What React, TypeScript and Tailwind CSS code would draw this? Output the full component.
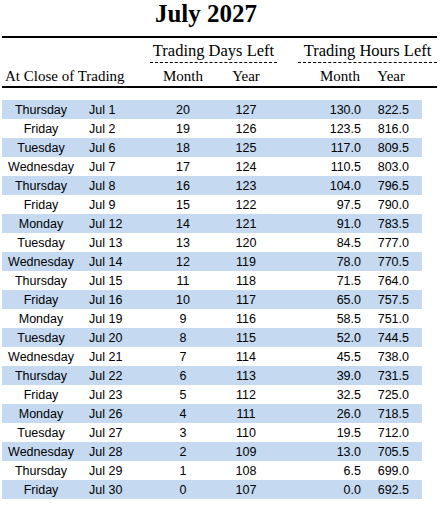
import React from "react";

type Row = {
  day: string;
  date: string;
  daysMonth: number;
  daysYear: number;
  hoursMonth: string;
  hoursYear: string;
};

const rows: Row[] = [
  { day: "Thursday", date: "Jul 1", daysMonth: 20, daysYear: 127, hoursMonth: "130.0", hoursYear: "822.5" },
  { day: "Friday", date: "Jul 2", daysMonth: 19, daysYear: 126, hoursMonth: "123.5", hoursYear: "816.0" },
  { day: "Tuesday", date: "Jul 6", daysMonth: 18, daysYear: 125, hoursMonth: "117.0", hoursYear: "809.5" },
  { day: "Wednesday", date: "Jul 7", daysMonth: 17, daysYear: 124, hoursMonth: "110.5", hoursYear: "803.0" },
  { day: "Thursday", date: "Jul 8", daysMonth: 16, daysYear: 123, hoursMonth: "104.0", hoursYear: "796.5" },
  { day: "Friday", date: "Jul 9", daysMonth: 15, daysYear: 122, hoursMonth: "97.5", hoursYear: "790.0" },
  { day: "Monday", date: "Jul 12", daysMonth: 14, daysYear: 121, hoursMonth: "91.0", hoursYear: "783.5" },
  { day: "Tuesday", date: "Jul 13", daysMonth: 13, daysYear: 120, hoursMonth: "84.5", hoursYear: "777.0" },
  { day: "Wednesday", date: "Jul 14", daysMonth: 12, daysYear: 119, hoursMonth: "78.0", hoursYear: "770.5" },
  { day: "Thursday", date: "Jul 15", daysMonth: 11, daysYear: 118, hoursMonth: "71.5", hoursYear: "764.0" },
  { day: "Friday", date: "Jul 16", daysMonth: 10, daysYear: 117, hoursMonth: "65.0", hoursYear: "757.5" },
  { day: "Monday", date: "Jul 19", daysMonth: 9, daysYear: 116, hoursMonth: "58.5", hoursYear: "751.0" },
  { day: "Tuesday", date: "Jul 20", daysMonth: 8, daysYear: 115, hoursMonth: "52.0", hoursYear: "744.5" },
  { day: "Wednesday", date: "Jul 21", daysMonth: 7, daysYear: 114, hoursMonth: "45.5", hoursYear: "738.0" },
  { day: "Thursday", date: "Jul 22", daysMonth: 6, daysYear: 113, hoursMonth: "39.0", hoursYear: "731.5" },
  { day: "Friday", date: "Jul 23", daysMonth: 5, daysYear: 112, hoursMonth: "32.5", hoursYear: "725.0" },
  { day: "Monday", date: "Jul 26", daysMonth: 4, daysYear: 111, hoursMonth: "26.0", hoursYear: "718.5" },
  { day: "Tuesday", date: "Jul 27", daysMonth: 3, daysYear: 110, hoursMonth: "19.5", hoursYear: "712.0" },
  { day: "Wednesday", date: "Jul 28", daysMonth: 2, daysYear: 109, hoursMonth: "13.0", hoursYear: "705.5" },
  { day: "Thursday", date: "Jul 29", daysMonth: 1, daysYear: 108, hoursMonth: "6.5", hoursYear: "699.0" },
  { day: "Friday", date: "Jul 30", daysMonth: 0, daysYear: 107, hoursMonth: "0.0", hoursYear: "692.5" },
];

const serif = "font-['Liberation_Serif',serif]";

export default function App() {
  return (
    <div className="w-[448px] h-[519px] bg-white text-black overflow-hidden">
      <h1 className={`${serif} text-[25px] font-bold leading-[26px] text-center w-[412px] pt-[1px]`}>
        July 2027
      </h1>

      <div className="ml-[2px] w-[435px] mt-[9px]">
        <div className="border-t-[2px] border-black" />

        {/* header row 1 */}
        <div className={`${serif} flex h-[24px] items-center pt-[3px] text-[16.5px] leading-none`}>
          <div className="w-[148px]" />
          <div className="w-[127px] text-center">Trading Days Left</div>
          <div className="w-[21px]" />
          <div className="w-[139px] text-center">Trading Hours Left</div>
        </div>
        <div className="flex h-[1px]">
          <div className="w-[148px]" />
          <div className="w-[127px] border-t border-dashed border-black" />
          <div className="w-[21px]" />
          <div className="w-[139px] border-t border-dashed border-black" />
        </div>

        {/* header row 2 */}
        <div className={`${serif} flex h-[23px] items-center pt-[3px] text-[15px] leading-none`}>
          <div className="w-[138px] pl-[3px] whitespace-nowrap">At Close of Trading</div>
          <div className="w-[86px] text-center">Month</div>
          <div className="w-[40px] text-center">Year</div>
          <div className="w-[94px] text-right">Month</div>
          <div className="w-[45px] text-right">Year</div>
        </div>
        <div className="border-t-[2px] border-black" />

        <div className="mt-[12px] w-[420px] font-['Liberation_Sans',Arial,sans-serif] text-[12.5px]">
          {rows.map((r, i) => (
            <div
              key={r.date}
              className={`flex h-[19px] items-center pt-[1px] leading-none ${i % 2 === 0 ? "bg-[#c5d9f1]" : "bg-white"}`}
            >
              <div className="w-[78px] text-center">{r.day}</div>
              <div className="w-[60px] pl-[9px]">{r.date}</div>
              <div className="w-[86px] text-center">{r.daysMonth}</div>
              <div className="w-[40px] text-center">{r.daysYear}</div>
              <div className="w-[95px] text-right">{r.hoursMonth}</div>
              <div className="w-[48px] text-right">{r.hoursYear}</div>
            </div>
          ))}
        </div>
      </div>
    </div>
  );
}
